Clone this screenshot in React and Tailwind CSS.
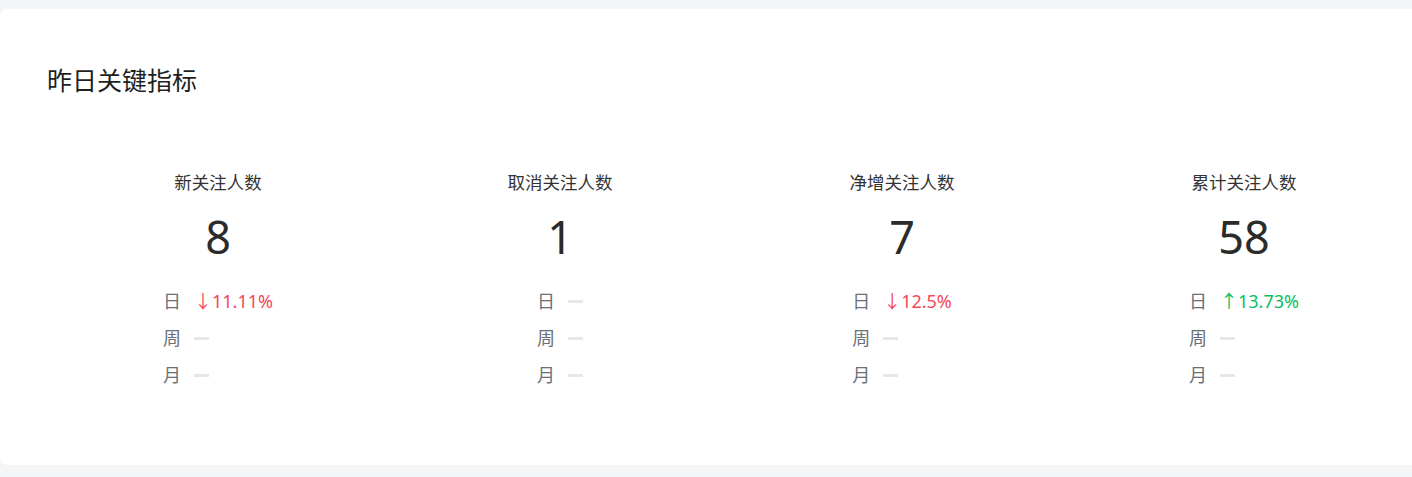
import React from "react";

const metrics = [
  { label: "新关注人数", value: "8", day: { dir: "down", text: "11.11%" } },
  { label: "取消关注人数", value: "1", day: null },
  { label: "净增关注人数", value: "7", day: { dir: "down", text: "12.5%" } },
  { label: "累计关注人数", value: "58", day: { dir: "up", text: "13.73%" } },
];

function Dash() {
  return <span className="inline-block w-[15px] h-[3px] bg-[#e6e7e9]" />;
}

function Row({ name, change }) {
  return (
    <div className="flex items-center h-[37px]">
      <span className="text-[#6b6f78] w-[31px]">{name}</span>
      {change ? (
        <span className={change.dir === "up" ? "text-[#07c160]" : "text-[#f5475a]"}>
          {change.dir === "up" ? "↑" : "↓"}
          {change.text}
        </span>
      ) : (
        <Dash />
      )}
    </div>
  );
}

export default function App() {
  return (
    <div
      className="min-h-screen bg-[#f4f5f7] pt-[9px] overflow-hidden"
      style={{ fontFamily: '"Noto Sans", "Noto Sans CJK SC", sans-serif' }}
    >
      <div className="w-[1440px] bg-white rounded-l-lg pt-[55px] pb-[71px] px-[47px]">
        <h2 className="text-[25px] leading-[32px] text-[#1f1f1f]">昨日关键指标</h2>

        <div className="mt-[74px] grid grid-cols-[repeat(4,342px)]">
          {metrics.map((m) => (
            <div key={m.label} className="flex flex-col items-center">
              <div className="text-[17.5px] leading-[24px] text-[#333]">{m.label}</div>
              <div className="mt-[15px] text-[45px] leading-[56px] text-[#2b2b2b]">{m.value}</div>
              <div className="mt-[18px] text-[18px]">
                <Row name="日" change={m.day} />
                <Row name="周" />
                <Row name="月" />
              </div>
            </div>
          ))}
        </div>
      </div>
    </div>
  );
}
